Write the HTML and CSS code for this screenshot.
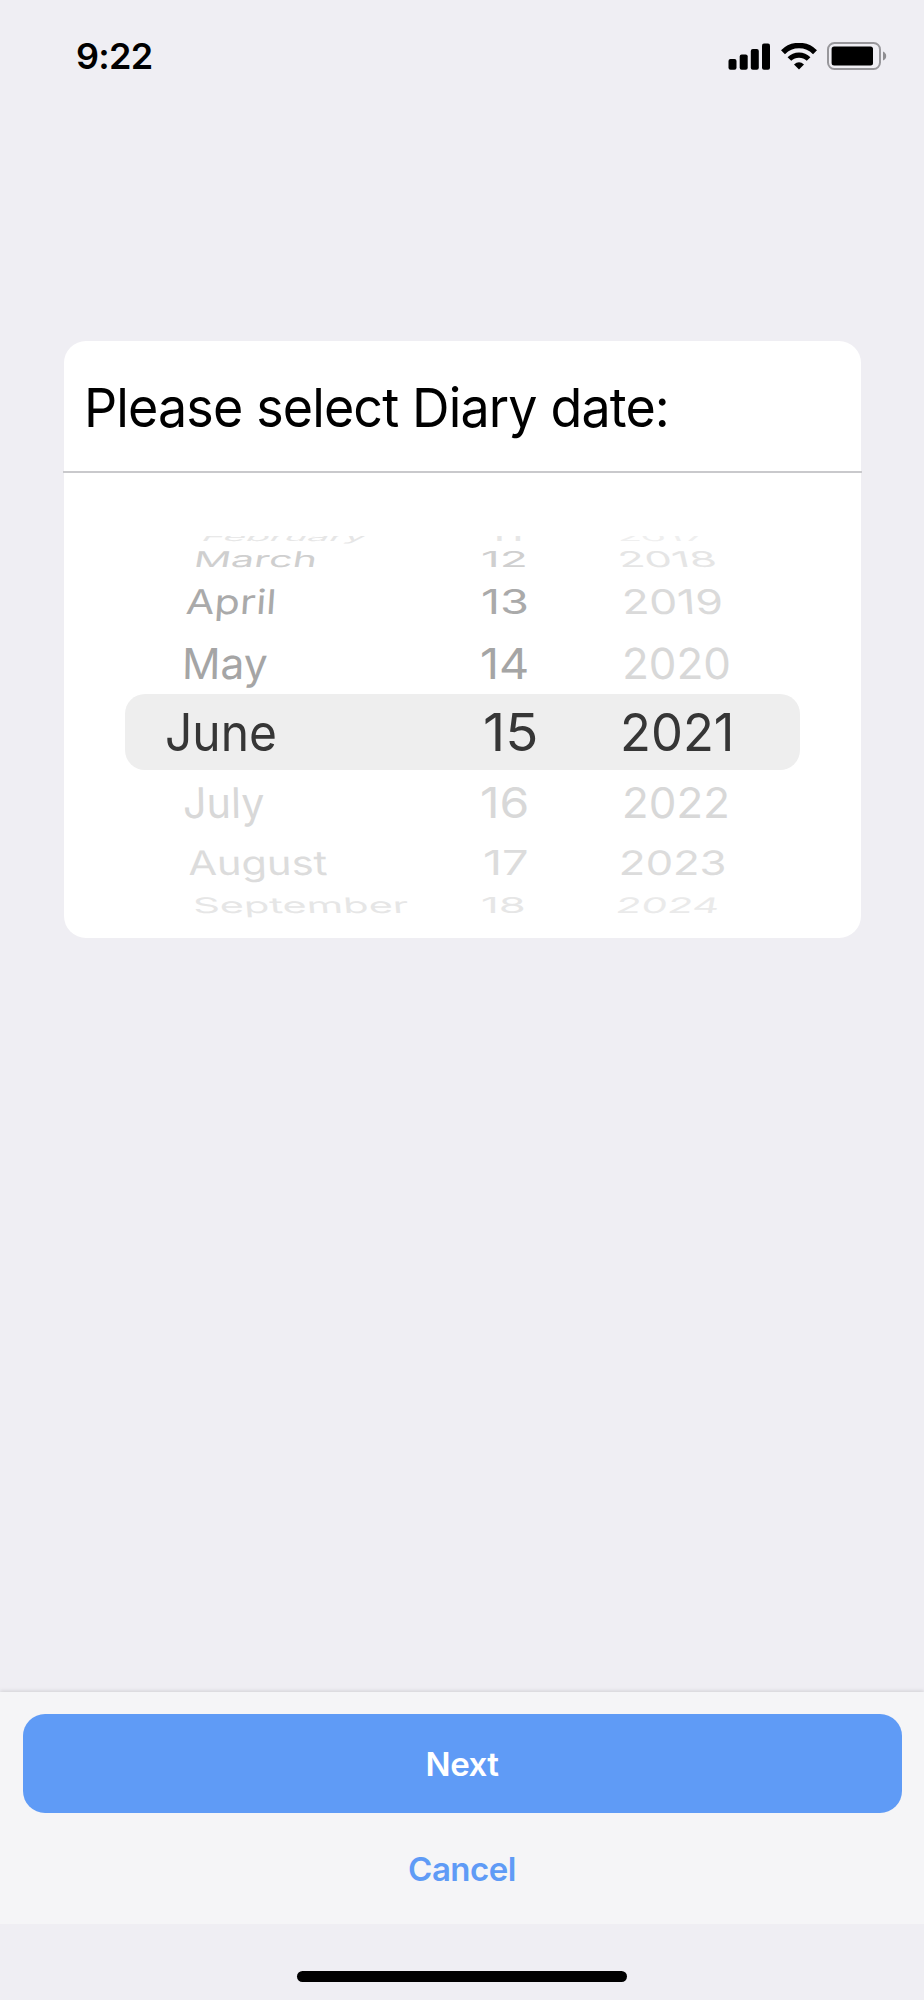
FILE: index.html
```
<!DOCTYPE html>
<html lang="en">
<head>
  <meta charset="UTF-8">
  <meta name="viewport" content="width=device-width, initial-scale=1.0">
  <title>Diary date</title>
  <link rel="stylesheet" href="styles.css">
</head>
<body>
  <header class="status-bar">
    <div class="time">9:22</div>
    <div class="status-icons">
      <svg class="signal" width="42" height="27" viewBox="0 0 42 27">
        <rect x="0.5" y="16" width="8" height="10.7" rx="2"/>
        <rect x="11.7" y="11.4" width="8" height="15.3" rx="2"/>
        <rect x="22.8" y="6" width="8" height="20.7" rx="2"/>
        <rect x="34" y="0.5" width="8" height="26.2" rx="2"/>
      </svg>
      <svg class="wifi" width="36" height="27" viewBox="0 0 36 27">
        <path d="M2 9.2 A22.6 22.6 0 0 1 34 9.2" fill="none" stroke="#000" stroke-width="5.6"/>
        <path d="M8.4 16 A13.6 13.6 0 0 1 27.6 16" fill="none" stroke="#000" stroke-width="5.2"/>
        <path d="M13 21.4 Q18 17 23 21.4 L18 26.6 Z"/>
      </svg>
      <svg class="battery" width="60" height="28" viewBox="0 0 60 28">
        <rect x="1" y="1" width="52" height="26" rx="6.5" fill="none" stroke="#98979b" stroke-width="2"/>
        <rect x="4.6" y="4.6" width="41.4" height="19" rx="2.5"/>
        <path d="M56 9.5 Q59.2 11 59.2 14 Q59.2 17 56 18.5 Z" fill="#8f8e92"/>
      </svg>
    </div>
  </header>

  <main class="content">
    <div class="card">
      <div class="card-header">
        <h1 class="card-title">Please select Diary date:</h1>
      </div>

      <div class="picker">
        <div class="row february">
          <span class="month">February</span>
          <span class="day">11</span>
          <span class="year">2017</span>
        </div>
        <div class="row march">
          <span class="month">March</span>
          <span class="day">12</span>
          <span class="year">2018</span>
        </div>
        <div class="row april">
          <span class="month">April</span>
          <span class="day">13</span>
          <span class="year">2019</span>
        </div>
        <div class="row may">
          <span class="month">May</span>
          <span class="day">14</span>
          <span class="year">2020</span>
        </div>
        <div class="row june selected">
          <span class="month">June</span>
          <span class="day">15</span>
          <span class="year">2021</span>
        </div>
        <div class="row july">
          <span class="month">July</span>
          <span class="day">16</span>
          <span class="year">2022</span>
        </div>
        <div class="row august">
          <span class="month">August</span>
          <span class="day">17</span>
          <span class="year">2023</span>
        </div>
        <div class="row september">
          <span class="month">September</span>
          <span class="day">18</span>
          <span class="year">2024</span>
        </div>
      </div>
    </div>
  </main>

  <footer class="actions">
    <button class="btn btn-next">Next</button>
    <button class="btn btn-cancel">Cancel</button>
  </footer>

  <div class="home-area">
    <div class="home-indicator"></div>
  </div>
</body>
</html>
```
FILE: styles.css
```
* {
  box-sizing: border-box;
  margin: 0;
  padding: 0;
  font-family: Inter, 'Liberation Sans', sans-serif;
}

body {
  height: 2000px;
  background: #efeef3;
  color: #000;
  display: flex;
  flex-direction: column;
  overflow: hidden;
}

/* Status bar */
.status-bar {
  height: 112px;
  padding: 0 37px 0 76px;
  display: flex;
  justify-content: space-between;
  align-items: center;
}

.time {
  font-size: 36px;
  font-weight: 600;
  letter-spacing: -0.7px;
}

.status-icons {
  display: flex;
  align-items: center;
}

.wifi {
  margin: 0 10px 0 11px;
}

/* Card */
.content {
  flex: 1;
  padding: 229px 63.5px 0 64px;
}

.card {
  height: 596.5px;
  background: white;
  border-radius: 22px;
}

.card-header {
  height: 132px;
  margin: 0 -1px;
  padding-left: 21px;
  border-bottom: 2px solid #c9c9cc;
}

.card-title {
  font-size: 54px;
  font-weight: 400;
  line-height: 133px;
  letter-spacing: -0.9px;
  white-space: nowrap;
  transform: scaleX(0.963);
  transform-origin: 0 50%;
}

/* Wheel picker, rows get flatter towards the top and bottom */
.picker {
  height: 401px;
  margin-top: 63px;
  overflow: hidden;
}

.row {
  display: grid;
  grid-template-columns: 315px 135px 160px;
  margin: 0 61px;
  padding-left: 40px;
  white-space: nowrap;
}

.row span {
  justify-self: start;
  margin-left: var(--x, 0);
  transform: skewX(var(--lean, 0deg)) scaleX(var(--stretch, 1));
  transform-origin: 0 50%;
}

.february {
  height: 19px;
  margin-top: -9px;
  font-size: 12px;
  line-height: 19px;
  color: #e6e6e6;
}

.february .month { --x: 38px; --stretch: 3.24; --lean: -35deg; }
.february .day { --x: 7px; --stretch: 3.8; }
.february .year { --x: 1px; --stretch: 3.35; --lean: 25deg; color: #efefef; }

.march {
  height: 27px;
  font-size: 21.6px;
  line-height: 27px;
  color: #cfcfcf;
}

.march .month { --x: 28.5px; --stretch: 1.91; --lean: -10deg; }
.march .day { --x: 1px; --stretch: 2.14; }
.march .year { --x: 2.5px; --stretch: 2.01; --lean: 13deg; color: #e5e5e5; }

.april {
  height: 58.5px;
  font-size: 34px;
  line-height: 58.5px;
  color: #aaa;
}

.april .month { --x: 21.3px; --stretch: 1.22; --lean: -4deg; }
.april .day { --x: 0.6px; --stretch: 1.38; }
.april .year { --x: 6.7px; --stretch: 1.31; --lean: 4deg; color: #dadada; }

.may {
  height: 62.5px;
  font-size: 42.6px;
  line-height: 63px;
  color: #a5a5a5;
}

.may .month { --x: 16.5px; --lean: -1deg; }
.may .day { --x: 0.4px; --stretch: 1.1; }
.may .year { --x: 7px; --stretch: 1.03; --lean: 1deg; color: #d8d8d8; }

.selected {
  height: 76px;
  padding-top: 1px;
  background: #eee;
  border-radius: 20px;
  font-size: 52px;
  line-height: 76px;
  color: #363636;
}

.june .month { --stretch: 0.922; }
.june .day { --x: 3.4px; --stretch: 1.05; }
.june .year { --x: 5px; --stretch: 0.975; }

.july {
  height: 66px;
  font-size: 42.2px;
  line-height: 66px;
  color: #d8d8d8;
}

.july .month { --x: 17.5px; --stretch: 0.98; --lean: 1deg; }
.july .day { --x: 0.1px; --stretch: 1.14; }
.july .year { --x: 7px; --stretch: 1.04; --lean: -1deg; }

.august {
  height: 54px;
  font-size: 33.6px;
  line-height: 54px;
  color: #dcdcdc;
}

.august .month { --x: 23px; --stretch: 1.24; --lean: 2deg; }
.august .day { --x: 2.8px; --stretch: 1.4; }
.august .year { --x: 3.8px; --stretch: 1.3; --lean: -2deg; }

.september {
  height: 31px;
  font-size: 21.3px;
  line-height: 31px;
  color: #e6e6e6;
}

.september .month { --x: 27.5px; --stretch: 1.95; --lean: 5deg; }
.september .day { --x: 0.5px; --stretch: 2.05; }
.september .year { --x: 1.2px; --stretch: 1.96; --lean: -10deg; color: #eaeaea; }

/* Bottom actions */
.actions {
  height: 232px;
  padding: 22px 22.5px;
  background: #f5f5f7;
  box-shadow: 0 -1px 4px rgba(0, 0, 0, 0.13);
  clip-path: inset(-6px 0 0 0);
}

.btn {
  display: block;
  width: 100%;
  border: none;
  font-size: 33px;
  font-weight: 600;
  letter-spacing: -0.5px;
  cursor: pointer;
}

.btn-next {
  height: 98.5px;
  background: #5f9bf6;
  border-radius: 22px;
  color: white;
  line-height: 100px;
}

.btn-cancel {
  height: 112px;
  background: none;
  color: #5f9bf6;
  line-height: 113px;
}

.home-area {
  height: 76px;
  padding-top: 47px;
}

.home-indicator {
  width: 330px;
  height: 11px;
  margin: 0 auto;
  background: #000;
  border-radius: 6px;
}
```
